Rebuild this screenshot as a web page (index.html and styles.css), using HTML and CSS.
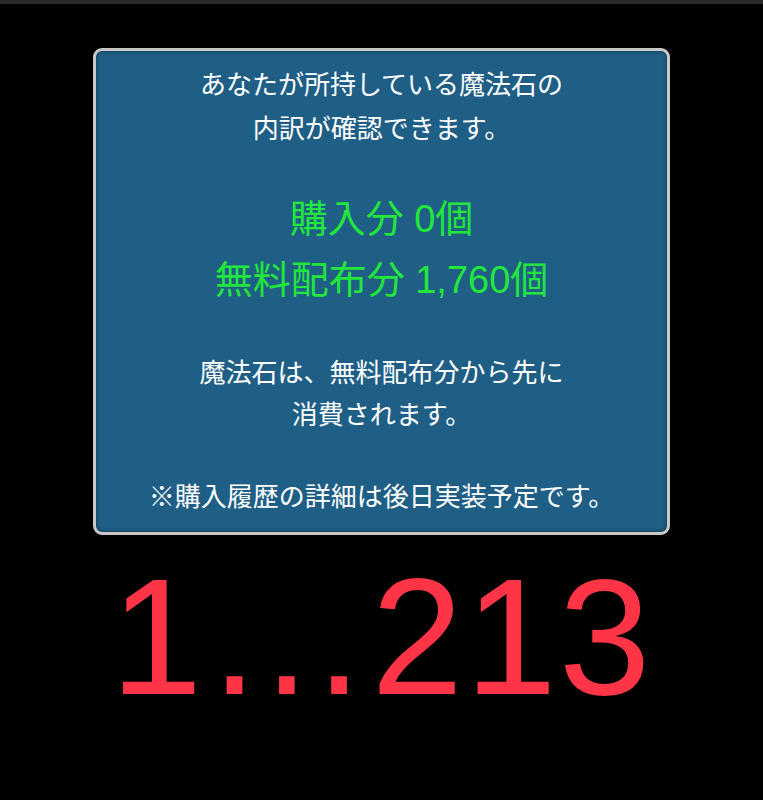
FILE: index.html
```html
<!DOCTYPE html>
<html lang="ja">
<head>
  <meta charset="UTF-8" />
  <meta name="viewport" content="width=device-width, initial-scale=1.0"/>
  <title>魔法石の内訳</title>
  <link rel="stylesheet" href="styles.css">
</head>
<body>

<div class="top-bar"></div>

<div class="stone-box">
  <p class="note">あなたが所持している魔法石の<br>内訳が確認できます。</p>
  <p class="count">購入分 0個<br>無料配布分 1,760個</p>
  <p class="note spaced">魔法石は、無料配布分から先に<br>消費されます。</p>
  <p class="note small">※購入履歴の詳細は後日実装予定です。</p>
</div>

<div class="counter">1…213</div>

</body>
</html>
```

FILE: styles.css
```css
body {
  margin: 0;
  padding: 0;
  background: #000;
  font-family: "Liberation Sans", "Noto Sans CJK JP", sans-serif;
  color: #fff;
}
.top-bar {
  height: 4px;
  background: #2a2a2a;
}
.stone-box {
  width: 571px;
  margin: 44px auto 0;
  background: #1f5f86;
  border: 3px solid #c8c8c8;
  border-radius: 9px;
  box-shadow: 0 0 6px rgba(0,0,0,0.6), inset 0 0 4px rgba(0,0,0,0.5);
  text-align: center;
  padding: 12px 0 14px;
}
.note {
  font-size: 26px;
  line-height: 44px;
  margin: 0;
}
.count {
  color: #22e63c;
  font-size: 38px;
  line-height: 61px;
  margin: 38px 0 0;
}
.spaced {
  line-height: 42px;
  margin-top: 41px;
}
.small {
  line-height: 42px;
  margin-top: 40px;
}
.counter {
  color: #ff3547;
  font-size: 165px;
  text-align: center;
  line-height: 1;
  margin-top: 20px;
  letter-spacing: 2px;
}
```
